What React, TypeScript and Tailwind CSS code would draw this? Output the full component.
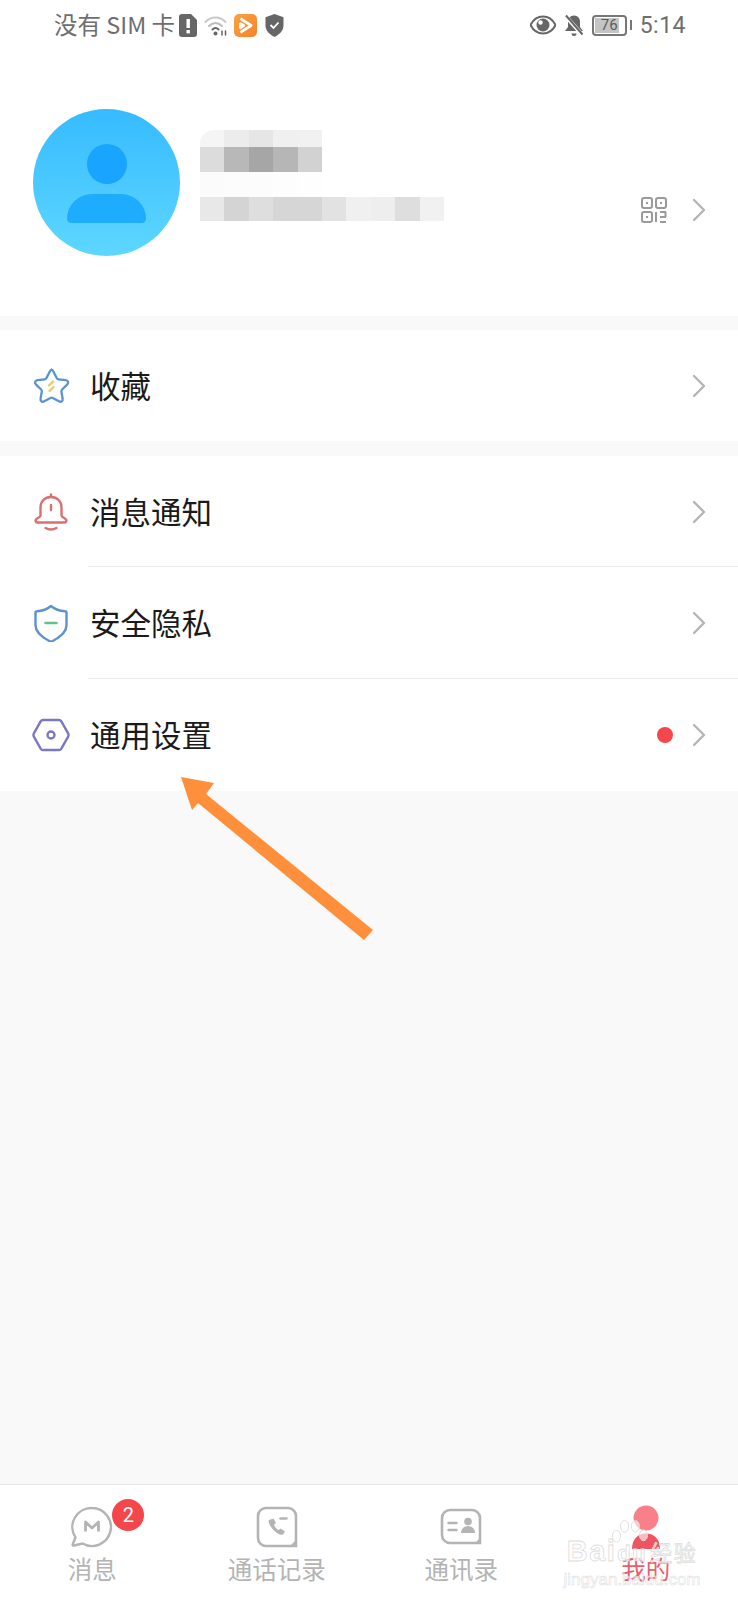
import React from 'react';

const cjk = "font-['Noto_Sans_CJK_SC',sans-serif]";

const mosaicRows = [
    { h: 'h-[17px]', cells: ['bg-[#f5f5f5]', 'bg-[#ececec]', 'bg-[#e6e6e6]', 'bg-[#f0f0f0]', 'bg-[#f1f1f1]'] },
    { h: 'h-[25px]', cells: ['bg-[#dcdcdc]', 'bg-[#b8b8b8]', 'bg-[#a6a6a6]', 'bg-[#b6b6b6]', 'bg-[#d2d2d2]'] },
    { h: 'h-[25px]', cells: ['bg-[#fbfbfb]', 'bg-[#fcfcfc]', 'bg-[#fcfcfc]', 'bg-[#fdfdfd]', 'bg-[#fefefe]'] },
    {
        h: 'h-[24px]',
        cells: ['bg-[#e8e8e8]', 'bg-[#d4d4d4]', 'bg-[#dedede]', 'bg-[#d6d6d6]', 'bg-[#d6d6d6]', 'bg-[#e2e2e2]', 'bg-[#f0f0f0]', 'bg-[#eeeeee]', 'bg-[#dedede]', 'bg-[#f1f1f1]'],
    },
];

const Chevron = () => (
    <svg width="14" height="24" viewBox="0 0 14 24" fill="none" stroke="#b5b5b5" strokeWidth="2.4" strokeLinecap="round" strokeLinejoin="round">
        <path d="M2 2l10 10L2 22" />
    </svg>
);

const QrIcon = () => (
    <svg width="26" height="26" viewBox="0 0 26 26" fill="none" stroke="#9a9a9a" strokeWidth="2">
        <rect x="1" y="1" width="10" height="10" rx="2" />
        <rect x="15" y="1" width="10" height="10" rx="2" />
        <rect x="1" y="15" width="10" height="10" rx="2" />
        <rect x="5" y="5" width="2" height="2" fill="#9a9a9a" stroke="none" />
        <rect x="19" y="5" width="2" height="2" fill="#9a9a9a" stroke="none" />
        <rect x="5" y="19" width="2" height="2" fill="#9a9a9a" stroke="none" />
        <path d="M15 15v10M19 15h6M19 20h6M24.500 15v5M19 25h6" />
    </svg>
);

const StarIcon = () => (
    <svg width="40" height="40" viewBox="0 0 38 38" fill="none">
        <path d="M19 2.500c1 0 1.800.7 2.400 1.900l3.300 6.600c.4.800 1 1.200 1.800 1.300l7 .9c2.800.4 3.500 2.500 1.600 4.400l-5 4.900c-.6.600-.8 1.300-.7 2.100l1.200 6.900c.4 2.700-1.300 4-3.700 2.700l-6.200-3.200c-.7-.4-1.500-.4-2.200 0l-6.200 3.200c-2.400 1.300-4.100 0-3.700-2.700l1.200-6.900c.1-.8-.1-1.500-.7-2.100l-5-4.900c-1.900-1.900-1.200-4 1.600-4.400l7-.9c.8-.1 1.400-.5 1.800-1.300l3.300-6.600c.6-1.200 1.400-1.900 2.400-1.900z" stroke="#5b93cf" strokeWidth="2.300" />
        <path d="M21 14.500l-4 4M21.500 20l-4 4" stroke="#ecc968" strokeWidth="2.400" strokeLinecap="round" />
    </svg>
);

const BellIcon = () => (
    <svg width="38" height="38" viewBox="0 0 38 38" fill="none" stroke="#d9706f" strokeWidth="2.400" strokeLinecap="round" strokeLinejoin="round">
        <path d="M19 4c-6.500 0-10.500 4.500-10.500 10.500v8c0 1.500-2 2-4 3.500-1.500 1-1 3.500 1 3.500h27c2 0 2.500-2.500 1-3.500-2-1.500-4-2-4-3.500v-8C29.500 8.500 25.500 4 19 4z" />
        <path d="M19 1.500v1.500M19 12v5M13.500 35c3.500 2 7.500 2 11 0" />
    </svg>
);

const ShieldIcon = () => (
    <svg width="38" height="38" viewBox="0 0 38 38" fill="none">
        <path d="M19 2c3.500 3 8 5 14 5.200 1 0 1.500.6 1.500 1.500v12.500c0 7-6.500 12-14.200 16-.8.400-1.800.400-2.600 0C10 33.200 3.500 28.200 3.500 21.200V8.700c0-.9.500-1.500 1.500-1.500C11 7 15.500 5 19 2z" stroke="#5b93cf" strokeWidth="2.400" strokeLinejoin="round" />
        <path d="M13.500 19h11" stroke="#62c28e" strokeWidth="2.600" strokeLinecap="round" />
    </svg>
);

const HexIcon = () => (
    <svg width="38" height="38" viewBox="0 0 38 38" fill="none" stroke="#7b78c4" strokeWidth="2.400" strokeLinejoin="round">
        <path d="M11 4h16c1 0 1.700.4 2.200 1.200l6.800 12c.6 1 .6 2.600 0 3.600l-6.800 12c-.5.800-1.200 1.200-2.200 1.200H11c-1 0-1.700-.4-2.200-1.200L2 20.800c-.6-1-.6-2.600 0-3.600l6.800-12C9.300 4.400 10 4 11 4z" />
        <circle cx="19" cy="19" r="3.500" />
    </svg>
);

const MenuRow: React.FC<{ icon: React.ReactNode; label: string; dot?: boolean; divider?: boolean; tall?: boolean }> = ({ icon, label, dot, divider, tall }) => (
    <div className={`relative flex items-center pl-[32px] pr-[32px] ${tall ? 'h-[112px]' : 'h-[111px]'}`}>
        <div className="flex w-[38px] justify-center">{icon}</div>
        <span className={`mb-[1px] ml-[20px] text-[30.500px] leading-none text-[#1a1a1a] ${cjk}`}>{label}</span>
        {dot && <span className="ml-auto h-[16px] w-[16px] rounded-full bg-[#f4474c]" />}
        <div className={dot ? 'ml-[19px] flex' : 'ml-auto flex'}>
            <Chevron />
        </div>
        {divider && <div className="absolute bottom-0 left-[88px] right-0 h-px bg-[#ececec]" />}
    </div>
);

const NavItem: React.FC<{ icon: React.ReactNode; label: string; active?: boolean; badge?: string }> = ({ icon, label, active, badge }) => (
    <div className="flex flex-1 flex-col items-center pt-[20px]">
        <div className="relative flex h-[44px] w-[44px] items-center justify-center">
            {icon}
            {badge && (
                <span className="absolute left-[42px] top-[-6px] flex h-[32px] w-[32px] items-center justify-center rounded-full bg-[#f4474c] font-['Roboto',sans-serif] text-[20px] leading-none text-white">
                    {badge}
                </span>
            )}
        </div>
        <span className={`mt-[5px] text-[24.500px] leading-[30px] ${active ? 'text-[#e8606e]' : 'text-[#b4b4b4]'} ${cjk}`}>{label}</span>
    </div>
);

const App: React.FC = () => {
    return (
        <div className="relative flex h-[1600px] w-[738px] flex-col overflow-hidden bg-[#f9f9f9]">
            {/* status bar */}
            <div className="flex h-[50px] items-center bg-white pl-[54px] pr-[52px] text-[#6e6e6e]">
                <span className={`text-[23.500px] leading-none ${cjk}`}>没有 SIM 卡</span>
                <svg className="ml-[3px]" width="20" height="23" viewBox="0 0 20 23">
                    <path d="M4 0h9l6 6v14a3 3 0 0 1-3 3H4a3 3 0 0 1-3-3V3a3 3 0 0 1 3-3z" fill="#666" />
                    <rect x="8.500" y="5" width="3.400" height="9" fill="#fff" />
                    <rect x="8.500" y="16" width="3.400" height="3.400" fill="#fff" />
                </svg>
                <svg className="ml-[6px]" width="25" height="23" viewBox="0 0 25 23" fill="none" strokeLinecap="round">
                    <path d="M1.500 8C7 2 16 2 21.500 8" stroke="#c8c8c8" strokeWidth="2" />
                    <path d="M5 12c4-4 9-4 13 0" stroke="#bdbdbd" strokeWidth="2" />
                    <path d="M8.500 15.500c2-2 4-2 6 0" stroke="#666" strokeWidth="2" />
                    <circle cx="11.500" cy="19.500" r="2" fill="#666" />
                    <path d="M18 17v4M21.500 17v4" stroke="#666" strokeWidth="1.500" />
                </svg>
                <div className="ml-[5px] flex h-[23px] w-[23px] items-center justify-center rounded-[5px] bg-gradient-to-br from-[#fba23f] to-[#f5822c]">
                    <svg width="17" height="17" viewBox="0 0 15 15" fill="none" stroke="#fff" strokeWidth="2.400" strokeLinejoin="round">
                        <path d="M3 1.500l9.500 6-9.500 6M3 6v3.500l3-2z" />
                    </svg>
                </div>
                <svg className="ml-[8px]" width="19" height="23" viewBox="0 0 19 23">
                    <path d="M9.500 0l9 3.200v8.300c0 5-3.800 9-9 11.500-5.200-2.500-9-6.500-9-11.500V3.200z" fill="#666" />
                    <path d="M5.500 11l3 3 5-5.500" fill="none" stroke="#fff" strokeWidth="1.800" />
                </svg>
                <svg className="ml-auto" width="26" height="20" viewBox="0 0 26 20">
                    <path d="M13 1.500C7.500 1.500 3 5 .500 10 3 15 7.500 18.500 13 18.500S23 15 25.500 10C23 5 18.500 1.500 13 1.500z" fill="none" stroke="#666" strokeWidth="2" />
                    <circle cx="13" cy="10" r="6.500" fill="#666" />
                    <circle cx="10.500" cy="7.500" r="2.200" fill="#fff" />
                </svg>
                <svg className="ml-[8px]" width="20" height="23" viewBox="0 0 20 23">
                    <path d="M10 1.500c-4 0-6 3-6 6.500v5l-3 4h18l-3-4V8c0-3.500-2-6.500-6-6.500z" fill="#666" />
                    <path d="M7.500 19.500a2.500 2.500 0 0 0 5 0z" fill="#666" />
                    <path d="M1.500 2l17 19" stroke="#fff" strokeWidth="4" />
                    <path d="M2 1.500l16.500 19" stroke="#666" strokeWidth="2" />
                </svg>
                <div className="ml-[8px] flex h-[21px] w-[35px] items-stretch rounded-[4px] border-2 border-[#777] p-px">
                    <div className="relative w-full">
                        <div className="h-full w-[24px] bg-[#c4c4c4]" />
                        <span className="absolute inset-0 flex items-center justify-center font-['Roboto',sans-serif] text-[15px] leading-none text-[#5c5c5c]">76</span>
                    </div>
                </div>
                <div className="ml-[3px] h-[10px] w-[2px] bg-[#777]" />
                <span className="ml-[8px] font-['Roboto',sans-serif] text-[23px] leading-none tracking-[0.5px]">5:14</span>
            </div>

            {/* profile */}
            <div className="flex h-[266px] items-start bg-white pl-[33px] pr-[32px] pt-[59px]">
                <div className="flex h-[147px] w-[147px] flex-col items-center rounded-full bg-gradient-to-b from-[#36bbff] to-[#5dd7ff] pt-[35px]">
                    <div className="h-[40px] w-[40px] rounded-full bg-[#18a4ff]" />
                    <div className="mt-[10px] h-[29px] w-[79px] rounded-b-[7px] rounded-t-[40px] bg-[#1eacff]" />
                </div>
                <div className="ml-[20px] mt-[21px] flex flex-col overflow-hidden rounded-tl-[14px] blur-[0.6px]">
                    {mosaicRows.map((row, i) => (
                        <div key={i} className={`flex ${row.h}`}>
                            {row.cells.map((c, j) => (
                                <div key={j} className={`w-[24.400px] ${c}`} />
                            ))}
                        </div>
                    ))}
                </div>
                <div className="ml-auto mt-[88px] flex items-center">
                    <QrIcon />
                    <div className="ml-[25px] flex">
                        <Chevron />
                    </div>
                </div>
            </div>

            {/* menu */}
            <div className="mt-[14px] bg-white">
                <MenuRow icon={<StarIcon />} label="收藏" />
            </div>
            <div className="mt-[15px] bg-white">
                <MenuRow icon={<BellIcon />} label="消息通知" divider />
                <MenuRow icon={<ShieldIcon />} label="安全隐私" divider tall />
                <MenuRow icon={<HexIcon />} label="通用设置" dot tall />
            </div>

            <div className="flex-1" />

            {/* bottom nav */}
            <div className="flex h-[116px] border-t border-[#e6e6e6] bg-white">
                <NavItem
                    badge="2"
                    label="消息"
                    icon={
                        <svg width="42" height="42" viewBox="0 0 42 42" fill="none">
                            <path d="M21 2a19 19 0 1 1-9.500 35.500L3 39.500c-1 .2-1.600-.6-1.200-1.500l2.700-6.500A19 19 0 0 1 21 2z" stroke="#b4b4b4" strokeWidth="2.400" strokeLinejoin="round" />
                            <path d="M14.500 25.500V16l6.500 6 6.500-6v9.500" stroke="#b4b4b4" strokeWidth="2.800" strokeLinejoin="round" />
                        </svg>
                    }
                />
                <NavItem
                    label="通话记录"
                    icon={
                        <svg width="42" height="42" viewBox="0 0 42 42" fill="none">
                            <path d="M10 2h22a8 8 0 0 1 8 8v30H10a8 8 0 0 1-8-8V10a8 8 0 0 1 8-8z" stroke="#b4b4b4" strokeWidth="2.600" />
                            <path d="M34 40l6-6v6z" fill="#b4b4b4" />
                            <path d="M13 14c-1 1 0 5 4 9.500s8 6 10 5l2-3-4.500-3-2 1.500c-2-1-4-3.500-4.500-5.500l2-1.500-2.500-4.500z" fill="#b4b4b4" />
                            <path d="M24.500 12.500h6" stroke="#b4b4b4" strokeWidth="2.400" strokeLinecap="round" />
                        </svg>
                    }
                />
                <NavItem
                    label="通讯录"
                    icon={
                        <svg width="42" height="38" viewBox="0 0 42 38" fill="none">
                            <path d="M10 2h22a8 8 0 0 1 8 8v25H10a8 8 0 0 1-8-8V10a8 8 0 0 1 8-8z" stroke="#b4b4b4" strokeWidth="2.600" />
                            <path d="M35 35l5-5v5z" fill="#b4b4b4" />
                            <path d="M8.500 15h8M8.500 22h8" stroke="#b4b4b4" strokeWidth="2.400" strokeLinecap="round" />
                            <circle cx="28" cy="13.500" r="3.800" fill="#b4b4b4" />
                            <path d="M21 25c0-4 3-7 7-7s7 3 7 7z" fill="#b4b4b4" />
                        </svg>
                    }
                />
                <NavItem
                    active
                    label="我的"
                    icon={
                        <svg width="30" height="44" viewBox="0 0 30 44">
                            <circle cx="15" cy="13" r="12.500" fill="#f97f88" />
                            <path d="M1 44c0-10 6-15.500 14-15.500S29 34 29 44z" fill="#ee5560" />
                        </svg>
                    }
                />
            </div>

            {/* annotation arrow */}
            <svg className="absolute left-0 top-0" width="738" height="1600" viewBox="0 0 738 1600" fill="none">
                <path d="M181 777l33 6-8 11 167 136-9 10-166-137-6 7z" fill="#ff8f3a" />
            </svg>

            {/* watermark */}
            <div className="absolute left-[566px] top-[1520px] flex w-[132px] flex-col items-center text-white/60">
                <svg className="absolute left-[44px] top-0" width="40" height="36" viewBox="0 0 42 40" fill="#ffffff" fillOpacity="0.6" stroke="#dcdcdc">
                    <ellipse cx="6" cy="18" rx="4.500" ry="6.500" />
                    <ellipse cx="15" cy="7" rx="4.500" ry="6.500" />
                    <ellipse cx="27" cy="7" rx="4.500" ry="6.500" />
                    <ellipse cx="36" cy="17" rx="4.500" ry="6" />
                </svg>
                <div className="mt-[16px] flex items-baseline font-['Liberation_Sans',sans-serif] text-[29px] font-bold leading-[30px] tracking-[1.500px] [-webkit-text-stroke:0.8px_#dddddd]">
                    <span>Bai</span>
                    <span className="ml-[1px] text-[22px]">du</span>
                    <span className={`ml-[3px] text-[22px] font-normal ${cjk}`}>经验</span>
                </div>
                <span className="mt-[2px] font-['Liberation_Sans',sans-serif] text-[17px] leading-[18px] text-white/50 [-webkit-text-stroke:0.5px_#dcdcdc]">jingyan.baidu.com</span>
            </div>
        </div>
    );
};

export default App;
